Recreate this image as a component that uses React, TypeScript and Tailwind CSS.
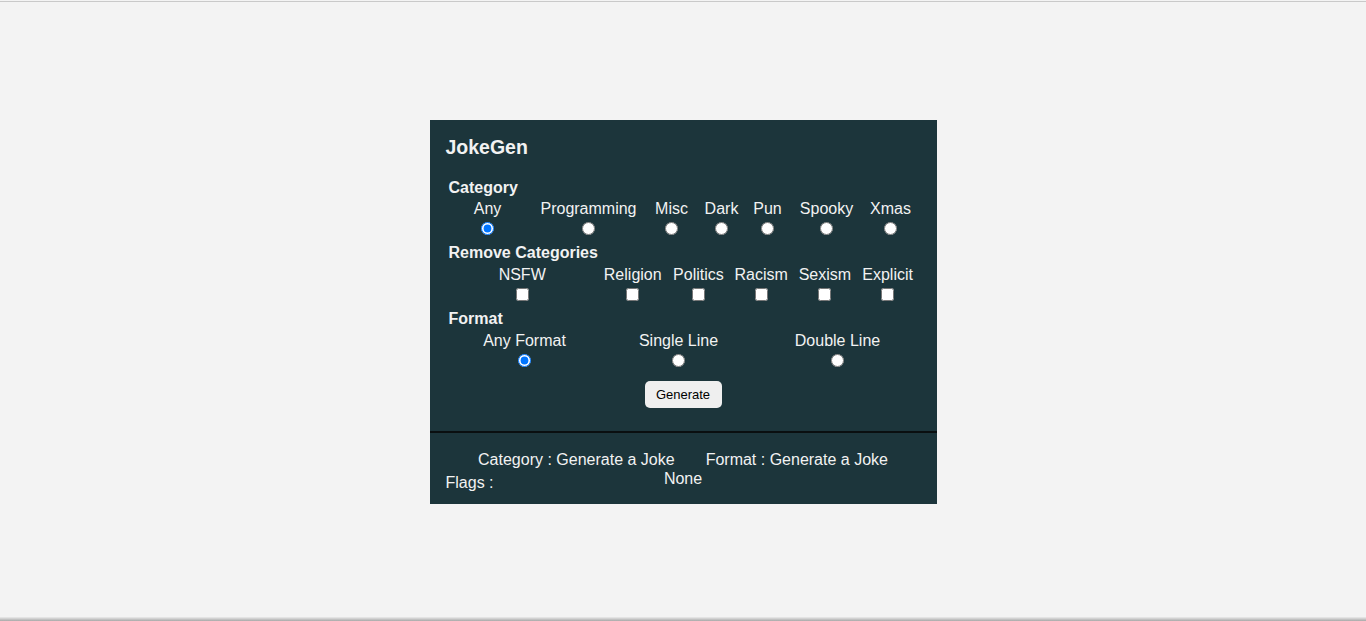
import { useState } from "react";

const categories = [
  { name: "Any", w: "w-[78px]" },
  { name: "Programming", w: "w-[124px]" },
  { name: "Misc", w: "w-[42px]" },
  { name: "Dark", w: "w-[58px]" },
  { name: "Pun", w: "w-[34px]" },
  { name: "Spooky", w: "w-[84px]" },
  { name: "Xmas", w: "w-[44px]" },
];

const flags = [
  { name: "NSFW", w: "w-[148px]" },
  { name: "Religion", w: "w-[74px]" },
  { name: "Politics", w: "w-[58px]" },
  { name: "Racism", w: "w-[68px]" },
  { name: "Sexism", w: "w-[60px]" },
  { name: "Explicit", w: "w-[66px]" },
];

const formats = [
  { name: "Any Format", w: "w-[152px]" },
  { name: "Single Line", w: "w-[156px]" },
  { name: "Double Line", w: "w-[162px]" },
];

function Heading({ children, className = "" }: { children: React.ReactNode; className?: string }) {
  return (
    <div className={`ml-[3px] h-[20px] leading-[20px] font-bold text-[16px] ${className}`}>{children}</div>
  );
}

export default function App() {
  const [category, setCategory] = useState("Any");
  const [format, setFormat] = useState("Any Format");
  const [removed, setRemoved] = useState<string[]>([]);

  return (
    <div className="h-[621px] flex flex-col bg-[#f3f3f3] pt-px font-['Liberation_Sans',Arial,sans-serif]">
      <div className="h-px bg-[#c9c9c9]"></div>
      <div className="flex-1 flex justify-center pt-[118px]">
        <div className="w-[507px] h-[384px] bg-[#1c353b] text-[#f2f2f2] flex flex-col">
          <div className="px-4 pt-[15px]">
            <div className="h-[24px] leading-[24px] text-[19.5px] font-bold">JokeGen</div>

            {/* Category */}
            <Heading className="mt-[19px]">Category</Heading>
            <div className="ml-[3px] mt-[1px] flex">
              {categories.map((c) => (
                <label key={c.name} className={`${c.w} flex flex-col items-center text-[16px]`}>
                  <span className="h-[20px] leading-[20px] whitespace-nowrap">{c.name}</span>
                  <span className="h-[20px] pb-[2px] flex items-center justify-center">
                    <input
                      type="radio"
                      name="category"
                      className="m-0 w-[13px] h-[13px]"
                      checked={category === c.name}
                      onChange={() => setCategory(c.name)}
                    />
                  </span>
                </label>
              ))}
            </div>

            {/* Remove Categories */}
            <Heading className="mt-[4px]">Remove Categories</Heading>
            <div className="ml-[3px] mt-[2px] flex">
              {flags.map((f) => (
                <label key={f.name} className={`${f.w} flex flex-col items-center text-[16px]`}>
                  <span className="h-[20px] leading-[20px] whitespace-nowrap">{f.name}</span>
                  <span className="h-[20px] pb-[2px] flex items-center justify-center">
                    <input
                      type="checkbox"
                      className="m-0 w-[13px] h-[13px]"
                      checked={removed.includes(f.name)}
                      onChange={() =>
                        setRemoved((r) => (r.includes(f.name) ? r.filter((x) => x !== f.name) : [...r, f.name]))
                      }
                    />
                  </span>
                </label>
              ))}
            </div>

            {/* Format */}
            <Heading className="mt-[4px]">Format</Heading>
            <div className="ml-[3px] mt-[2px] flex">
              {formats.map((f) => (
                <label key={f.name} className={`${f.w} flex flex-col items-center text-[16px]`}>
                  <span className="h-[20px] leading-[20px] whitespace-nowrap">{f.name}</span>
                  <span className="h-[20px] pb-[2px] flex items-center justify-center">
                    <input
                      type="radio"
                      name="format"
                      className="m-0 w-[13px] h-[13px]"
                      checked={format === f.name}
                      onChange={() => setFormat(f.name)}
                    />
                  </span>
                </label>
              ))}
            </div>

            <div className="flex justify-center mt-[10px]">
              <button className="w-[77px] h-[27px] rounded-[5px] bg-[#efefef] text-black text-[13px] leading-[27px]">
                Generate
              </button>
            </div>
          </div>

          <div className="mt-[23px] h-[2px] bg-[#0a0f10]"></div>

          {/* Result */}
          <div className="px-4 pt-[17px] text-[16px]">
            <div className="flex justify-center gap-[31px] h-[20px] leading-[20px]">
              <span>Category : Generate a Joke</span>
              <span>Format : Generate a Joke</span>
            </div>
            <div className="flex h-[24px]">
              <div className="flex-1 pt-[3px] leading-[20px]">Flags :</div>
              <div className="-mt-px leading-[20px]">None</div>
              <div className="flex-1"></div>
            </div>
          </div>
        </div>
      </div>
      <div className="h-[4px] bg-gradient-to-b from-[#ececec] to-[#a8a8a8]"></div>
    </div>
  );
}
